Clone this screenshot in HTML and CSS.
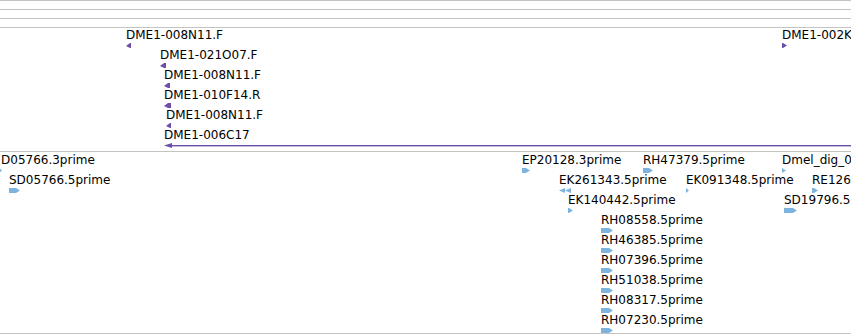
FILE: index.html
```html
<!DOCTYPE html>
<html lang="en">
<head>
  <meta charset="UTF-8">
  <title>Feature tracks</title>
  <link rel="stylesheet" href="styles.css">
</head>
<body>
  <div class="ruler">
    <div class="ruler-line"></div>
    <div class="ruler-line"></div>
    <div class="ruler-line"></div>
  </div>
  <div class="track track-est" id="track-est"></div>
  <div class="track track-cdna" id="track-cdna"></div>
  <script>
    const ROW = 20;

    const estFeatures = [
      { name: "DME1-008N11.F", x: 126, row: 0, w: 5, strand: -1 },
      { name: "DME1-021O07.F", x: 160, row: 1, w: 6, strand: -1 },
      { name: "DME1-008N11.F", x: 164, row: 2, w: 6, strand: -1 },
      { name: "DME1-010F14.R", x: 164, row: 3, w: 7, strand: -1 },
      { name: "DME1-008N11.F", x: 166, row: 4, w: 5, strand: -1 },
      { name: "DME1-006C17", x: 164, row: 5, w: 690, strand: -1, long: true },
      { name: "DME1-002K17.F", x: 782, row: 0, w: 5, strand: 1 }
    ];

    const cdnaFeatures = [
      { name: "D05766.3prime", x: 1, row: 0, w: 3, strand: 1, gx: -2 },
      { name: "SD05766.5prime", x: 9, row: 1, w: 11, strand: 1 },
      { name: "EP20128.3prime", x: 522, row: 0, w: 8, strand: 1 },
      { name: "RH47379.5prime", x: 643, row: 0, w: 10, strand: 1 },
      { name: "Dmel_dig_06734", x: 782, row: 0, w: 4, strand: 1 },
      { name: "EK261343.5prime", x: 559, row: 1, w: 12, strand: -1, double: true },
      { name: "EK091348.5prime", x: 686, row: 1, w: 3, strand: 1 },
      { name: "RE12637.5prime", x: 812, row: 1, w: 6, strand: 1 },
      { name: "EK140442.5prime", x: 568, row: 2, w: 5, strand: 1 },
      { name: "SD19796.5prime", x: 784, row: 2, w: 13, strand: 1 },
      { name: "RH08558.5prime", x: 601, row: 3, w: 12, strand: 1 },
      { name: "RH46385.5prime", x: 601, row: 4, w: 12, strand: 1 },
      { name: "RH07396.5prime", x: 601, row: 5, w: 12, strand: 1 },
      { name: "RH51038.5prime", x: 601, row: 6, w: 12, strand: 1 },
      { name: "RH08317.5prime", x: 601, row: 7, w: 12, strand: 1 },
      { name: "RH07230.5prime", x: 601, row: 8, w: 12, strand: 1 }
    ];

    function glifo(f) {
      const h = 5;
      const w = f.w;
      const p = Math.min(4, w);
      let forma;
      if (f.long) {
        forma = `<polygon points="0,2.5 8,0 8,5"/><rect x="8" y="2" width="${w - 8}" height="1.4"/>`;
      } else if (f.double) {
        forma = `<polygon points="0,2.5 6,0 6,5"/><polygon points="6,2.5 12,0 12,5"/>`;
      } else if (f.strand < 0) {
        forma = `<polygon points="0,3 ${p},0 ${w},0 ${w},${h} ${p},${h}"/>`;
      } else {
        forma = `<polygon points="0,0 ${w - p},0 ${w},2.5 ${w - p},${h} 0,${h}"/>`;
      }
      return `<svg class="glyph" width="${w}" height="${h}" viewBox="0 0 ${w} ${h}" style="margin-left:${f.gx || 0}px">${forma}</svg>`;
    }

    function renderizarTrilha(id, lista, topo) {
      const trilha = document.getElementById(id);
      lista.forEach(f => {
        const el = document.createElement("div");
        el.className = "feature";
        el.style.left = f.x + "px";
        el.style.top = (topo + f.row * ROW) + "px";
        el.innerHTML = `<span class="label">${f.name}</span>${glifo(f)}`;
        trilha.appendChild(el);
      });
    }

    renderizarTrilha("track-est", estFeatures, 0);
    renderizarTrilha("track-cdna", cdnaFeatures, 1);
  </script>
</body>
</html>
```

FILE: styles.css
```css
body {
  margin: 0;
  background: #fff;
  font-family: "DejaVu Sans", sans-serif;
  font-size: 12px;
  color: #000;
  width: 851px;
  height: 335px;
  overflow: hidden;
}
.ruler-line {
  height: 8px;
  border-top: 1px solid #c4c4c4;
}
.track {
  position: relative;
  overflow: hidden;
  border-top: 1px solid #c4c4c4;
}
.track-est {
  height: 123px;
}
.track-cdna {
  height: 181px;
  border-bottom: 1px solid #c4c4c4;
}
.feature {
  position: absolute;
  white-space: nowrap;
}
.label {
  display: block;
  line-height: 14px;
}
.glyph {
  display: block;
  margin-top: 1px;
  overflow: visible;
}
.track-est .glyph {
  fill: #6c4fa8;
}
.track-cdna .glyph {
  fill: #7db4df;
}
```
